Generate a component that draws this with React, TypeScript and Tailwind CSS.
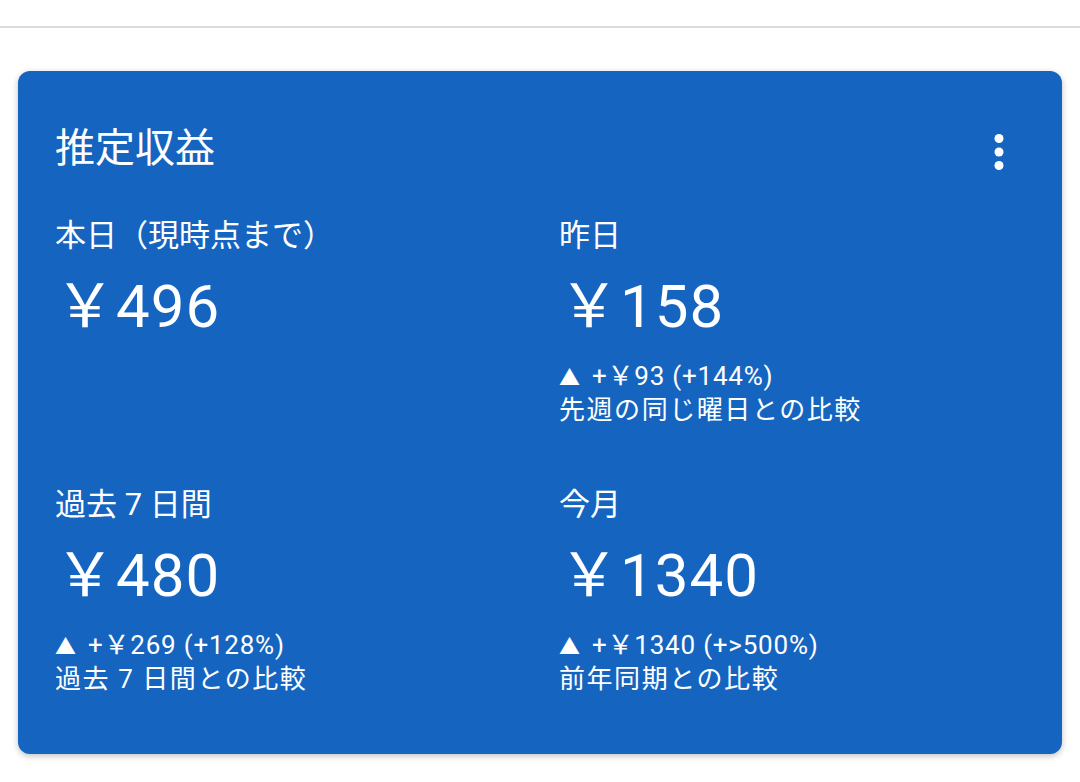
const stats = [
  { label: '本日（現時点まで）', value: '￥496' },
  {
    label: '昨日',
    value: '￥158',
    change: '+￥93 (+144%)',
    note: '先週の同じ曜日との比較',
  },
  {
    label: '過去 7 日間',
    value: '￥480',
    change: '+￥269 (+128%)',
    note: '過去 7 日間との比較',
  },
  {
    label: '今月',
    value: '￥1340',
    change: '+￥1340 (+>500%)',
    note: '前年同期との比較',
  },
];

function MoreVert() {
  return (
    <svg viewBox="0 0 24 24" className="w-[54px] h-[54px] mt-[6px] -mr-[1px]" fill="white">
      <circle cx="12" cy="6" r="2" />
      <circle cx="12" cy="12" r="2" />
      <circle cx="12" cy="18" r="2" />
    </svg>
  );
}

export default function App() {
  return (
    <div className="min-h-[782px] bg-white font-['Roboto','Noto_Sans_CJK_JP',sans-serif] text-white">
      <div className="pt-[26px]">
        <div className="h-[2px] bg-[#dadce0]" />
      </div>
      <div className="mx-[18px] mt-[43px] rounded-[12px] bg-[#1565c0] pt-[54px] pb-[58px] px-[37px] shadow-[0_2px_6px_rgba(0,0,0,0.25)]">
        <div className="flex h-[48px] items-center justify-between">
          <h1 className="text-[40px] leading-[48px] font-normal">推定収益</h1>
          <MoreVert />
        </div>
        <div className="mt-[43px] grid grid-cols-2 gap-x-[38px] gap-y-[58px]">
          {stats.map((s) => (
            <div key={s.label} className="flex flex-col">
              <span className="text-[31px] leading-[40px]">{s.label}</span>
              <span className="mt-[16px] h-[70px] text-[60px] leading-[70px] tracking-[1px]">{s.value}</span>
              {s.change && (
                <div className="mt-[17px] flex flex-col text-[26px] leading-[34px]">
                  <span className="h-[34px] tracking-[0.03em]">
                    <span className="text-[21px] leading-none mr-[4px]">▲</span> {s.change}
                  </span>
                  <span className="h-[34px] tracking-[0.06em]">{s.note}</span>
                </div>
              )}
            </div>
          ))}
        </div>
      </div>
    </div>
  );
}
